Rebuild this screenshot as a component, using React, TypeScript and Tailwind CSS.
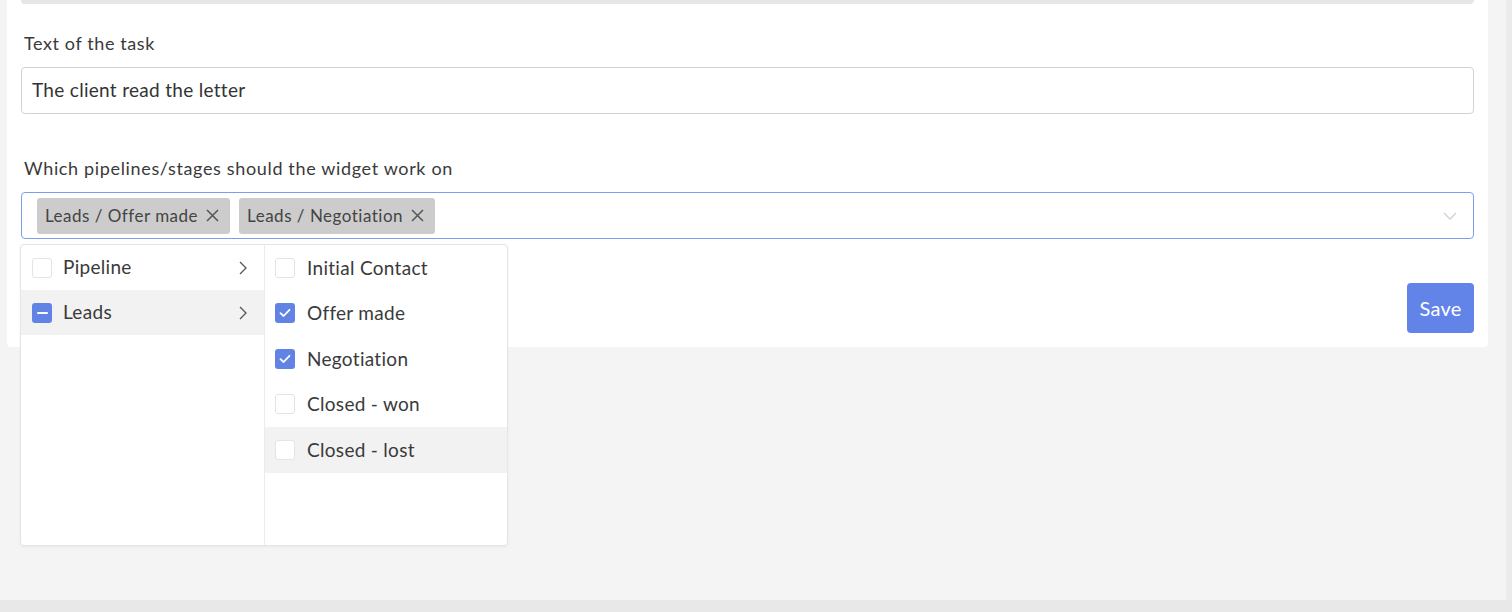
import React from 'react';

const font = { fontFamily: 'Lato, "Open Sans", sans-serif' };

function Checkbox({ state }: { state: 'off' | 'on' | 'partial' }) {
  if (state === 'off') {
    return <span className="w-[20px] h-[20px] rounded-[3px] border border-[#e4e4e4] bg-white shrink-0" />;
  }
  return (
    <span className="w-[20px] h-[20px] rounded-[3px] bg-[#6283e6] shrink-0 flex items-center justify-center">
      {state === 'on' ? (
        <svg width="12" height="10" viewBox="0 0 12 10" fill="none">
          <path d="M1.5 5.2 L4.6 8 L10.5 1.8" stroke="white" strokeWidth="1.8" strokeLinecap="round" strokeLinejoin="round" />
        </svg>
      ) : (
        <span className="w-[11px] h-[2px] bg-white rounded" />
      )}
    </span>
  );
}

function Chip({ label }: { label: string }) {
  return (
    <div className="h-[36px] flex items-center gap-[8px] bg-[#cccccc] rounded-[3px] pl-[8px] pr-[11px] text-[17px] tracking-[0.5px] text-[#444]">
      <span>{label}</span>
      <svg width="13" height="13" viewBox="0 0 13 13">
        <path d="M1 1 L12 12 M12 1 L1 12" stroke="#555" strokeWidth="1.5" />
      </svg>
    </div>
  );
}

export default function App() {
  const pipelines = [
    { name: 'Pipeline', state: 'off' as const, active: false },
    { name: 'Leads', state: 'partial' as const, active: true },
  ];
  const stages = [
    { name: 'Initial Contact', state: 'off' as const, active: false },
    { name: 'Offer made', state: 'on' as const, active: false },
    { name: 'Negotiation', state: 'on' as const, active: false },
    { name: 'Closed - won', state: 'off' as const, active: false },
    { name: 'Closed - lost', state: 'off' as const, active: true },
  ];

  return (
    <div className="w-full h-[612px] bg-[#f4f4f4] flex flex-col overflow-hidden" style={font}>
      <div className="flex-1 flex">
        <div className="flex-1 pl-[7px] pr-[18px]">
          {/* Card */}
          <div className="bg-white h-[347px] px-[14px] rounded-b-[4px]">
            <div className="h-[4px] bg-[#e6e6e6] rounded-b-[4px]" />

            <div className="mt-[27px] mb-[12px] pl-[3px] text-[18px] leading-[24px] tracking-[0.6px] text-[#3a3a3a]">
              Text of the task
            </div>
            <div className="h-[47px] border border-[#d2d2d2] rounded-[4px] px-[10px] flex items-center text-[19px] tracking-[0.3px] text-[#333]">
              The client read the letter
            </div>

            <div className="mt-[42px] mb-[12px] pl-[3px] text-[18px] leading-[24px] tracking-[0.65px] text-[#3a3a3a]">
              Which pipelines/stages should the widget work on
            </div>

            <div className="relative">
              <div className="h-[47px] border border-[#7f9df0] rounded-[4px] pl-[15px] pr-[16px] flex items-center gap-[9px]">
                <Chip label="Leads / Offer made" />
                <Chip label="Leads / Negotiation" />
                <svg className="ml-auto" width="14" height="8" viewBox="0 0 14 8">
                  <path d="M1 1 L7 7 L13 1" stroke="#d0d0d0" strokeWidth="1.3" fill="none" />
                </svg>
              </div>

              {/* Dropdown */}
              <div className="absolute left-[-1px] top-[52px] w-[488px] h-[302px] bg-white border border-[#e6e6e6] rounded-[4px] shadow-[0_1px_3px_rgba(0,0,0,0.05)] flex z-10 text-[19px] tracking-[0.3px] text-[#3a3a3a]">
                <div className="w-[244px] border-r border-[#ebebf0]">
                  {pipelines.map((p) => (
                    <div
                      key={p.name}
                      className={`h-[45px] flex items-center pl-[11px] pr-[17px] gap-[11px] ${p.active ? 'bg-[#f2f2f2]' : ''}`}
                    >
                      <Checkbox state={p.state} />
                      <span>{p.name}</span>
                      <svg className="ml-auto" width="8" height="14" viewBox="0 0 8 14">
                        <path d="M1 1 L7 7 L1 13" stroke="#555" strokeWidth="1.3" fill="none" />
                      </svg>
                    </div>
                  ))}
                </div>
                <div className="flex-1">
                  {stages.map((s) => (
                    <div
                      key={s.name}
                      className={`h-[45.5px] flex items-center pl-[10px] gap-[12px] ${s.active ? 'bg-[#f2f2f2]' : ''}`}
                    >
                      <Checkbox state={s.state} />
                      <span>{s.name}</span>
                    </div>
                  ))}
                </div>
              </div>
            </div>

            <div className="mt-[44px] flex justify-end">
              <button className="w-[67px] h-[50px] rounded-[4px] bg-[#6284e8] text-white text-[20px] tracking-[0.3px]">Save</button>
            </div>
          </div>
        </div>
        <div className="w-[6px] bg-[#ebebeb]" />
      </div>
      <div className="h-[12px] bg-[#e8e8e8]" />
    </div>
  );
}
